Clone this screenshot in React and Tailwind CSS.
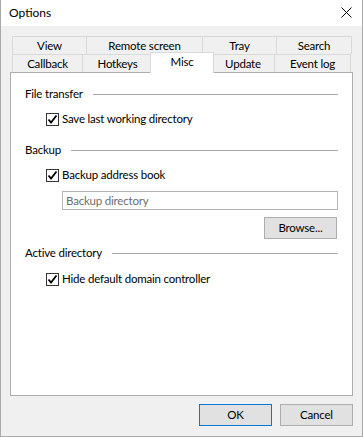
import React from 'react';

const FONT = { fontFamily: 'Lato, "Liberation Sans", sans-serif' };

const topTabs = [
  { label: 'View', w: 'w-[75px]' },
  { label: 'Remote screen', w: 'w-[117px]' },
  { label: 'Tray', w: 'w-[75px]' },
  { label: 'Search', w: 'w-[76px]' },
];

// body text size used throughout the dialog
const TXT = 'text-[11.5px] tracking-[-0.2px] leading-none';

function Tab({ label, w, first }) {
  return (
    <div
      className={`${w} ${first ? '' : '-ml-px'} h-full flex items-center justify-center border border-b-0 border-[#d9d9d9] bg-[#f0f0f0] ${TXT} text-black`}
    >
      {label}
    </div>
  );
}

function CheckBox() {
  return (
    <span className="w-[13px] h-[13px] border border-[#333333] bg-white flex items-center justify-center shrink-0">
      <svg width="11" height="11" viewBox="0 0 11 11">
        <path d="M1.5 5.5 L4 8.5 L9.5 1.5" fill="none" stroke="#000" strokeWidth="1.8" />
      </svg>
    </span>
  );
}

function GroupLabel({ children }) {
  return (
    <div className="h-[16px] flex items-center gap-[10px]">
      <span className={`${TXT} whitespace-nowrap`}>{children}</span>
      <span className="flex-1 h-px bg-[#a9a9a9]" />
    </div>
  );
}

function CheckRow({ children }) {
  return (
    <div className="h-[16px] flex items-center pl-[21px] gap-[3px]">
      <CheckBox />
      <span className={`${TXT} whitespace-nowrap`}>{children}</span>
    </div>
  );
}

function WinButton({ children, focused }) {
  return (
    <button
      className={`w-[73px] h-[22px] flex items-center justify-center bg-[#e1e1e1] border ${TXT} text-black ${focused ? 'border-[#0078d7]' : 'border-[#adadad]'}`}
    >
      {children}
    </button>
  );
}

export default function App() {
  return (
    <div className="w-[363px] h-[437px] flex flex-col bg-[#f0f0f0] border-x border-b border-[#aaaaaa] text-black" style={FONT}>
      {/* Title bar */}
      <div className="h-[26px] bg-white flex items-center justify-between pl-[8px] pr-[10px] shrink-0">
        <span className="text-[12px] leading-none">Options</span>
        <svg width="11" height="11" viewBox="0 0 11 11" className="-mt-[2px]">
          <path d="M0.5 0.5 L10.5 10.5 M10.5 0.5 L0.5 10.5" stroke="#000" strokeWidth="1" />
        </svg>
      </div>

      {/* Tabs */}
      <div className="pt-[10px] px-[10px] flex flex-col">
        <div className="h-[18px] flex pl-px">
          {topTabs.map((t, i) => (
            <Tab key={t.label} {...t} first={i === 0} />
          ))}
        </div>
        <div className="h-[18px] flex pl-px relative">
          <Tab label="Callback" w="w-[71px]" first />
          <Tab label="Hotkeys" w="w-[71px]" />
          <div className="w-[60px] -ml-px" />
          <Tab label="Update" w="w-[64px]" />
          <Tab label="Event log" w="w-[77px]" />
          <div className={`absolute left-[139px] -top-[2px] w-[64px] h-[21px] bg-white border border-b-0 border-[#d9d9d9] z-10 flex justify-center pt-[3px] ${TXT}`}>
            Misc
          </div>
        </div>
      </div>

      {/* Panel */}
      <div className="ml-[9px] w-[343px] h-[324px] bg-white border border-[#adadad] flex flex-col px-[14px] pt-[13px]">
        <GroupLabel>File transfer</GroupLabel>
        <div className="mt-[9px]">
          <CheckRow>Save last working directory</CheckRow>
        </div>
        <div className="mt-[15px]">
          <GroupLabel>Backup</GroupLabel>
        </div>
        <div className="mt-[9px]">
          <CheckRow>Backup address book</CheckRow>
        </div>
        <div className="mt-[8px] pl-[37px]">
          <div className={`h-[19px] border border-[#b4b4b4] flex items-center px-[3px] ${TXT} text-[#6d6d6d]`}>
            Backup directory
          </div>
        </div>
        <div className="mt-[7px] flex justify-end pr-px">
          <WinButton>Browse...</WinButton>
        </div>
        <div className="mt-[6px]">
          <GroupLabel>Active directory</GroupLabel>
        </div>
        <div className="mt-[10px]">
          <CheckRow>Hide default domain controller</CheckRow>
        </div>
      </div>

      {/* Footer buttons */}
      <div className="flex justify-end gap-[8px] pr-[9px] pt-[8px]">
        <WinButton focused>OK</WinButton>
        <WinButton>Cancel</WinButton>
      </div>
    </div>
  );
}
